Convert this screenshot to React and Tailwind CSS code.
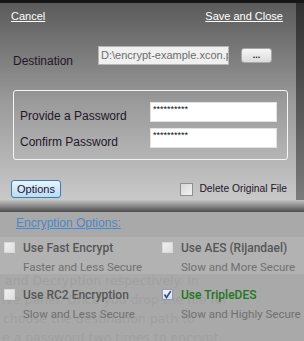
import React from "react";

const ghostLines = [
  "and Decryption respectively. In",
  "ive panel. Once you drop the file for",
  "choose the destination path to",
  "e a password two times to encrypt.",
];

function LightBox({ checked }) {
  return (
    <div
      className={`w-[11px] h-[11px] shrink-0 flex items-center justify-center ${
        checked
          ? "border border-[#8c9cb4] bg-gradient-to-b from-[#f4f4f4] to-[#dcdcdc]"
          : "border border-[#d8d8d8] bg-gradient-to-br from-[#f0f0f0] to-[#dedede]"
      }`}
    >
      {checked && (
        <svg width="9" height="9" viewBox="0 0 9 9">
          <path d="M1.5 4.5 L3.5 7.5 L7.8 1" fill="none" stroke="#2b4f95" strokeWidth="1.6" />
        </svg>
      )}
    </div>
  );
}

function Option({ label, hint, checked }) {
  return (
    <div className="flex items-start pt-[4px]">
      <div className="ml-[4px] mt-[1px]">
        <LightBox checked={checked} />
      </div>
      <div className="ml-[8px] flex flex-col">
        <span
          className={`font-['Roboto',sans-serif] font-medium text-[12px] leading-[14px] ${
            checked ? "text-[#237523]" : "text-[#565656]"
          }`}
        >
          {label}
        </span>
        <span className="mt-[5px] font-['Roboto',sans-serif] text-[11.5px] leading-[14px] text-[#707070]">
          {hint}
        </span>
      </div>
    </div>
  );
}

export default function App() {
  return (
    <div className="relative w-[304px] h-[341px] overflow-hidden bg-[#a9a9a9] font-['Liberation_Sans',sans-serif]">
      {/* faded page text behind the options */}
      <div className="absolute left-0 top-[271px] pl-[2px] font-['DejaVu_Sans',sans-serif] text-[12.5px] leading-[19px] text-[#a0a0a0] whitespace-nowrap">
        {ghostLines.map((l, i) => (
          <div key={i} className={i === 0 ? "pl-[3px]" : i === 2 ? "pl-[1px]" : ""}>
            {l}
          </div>
        ))}
      </div>

      <div className="relative">
        <div className="h-[3px] bg-[#161616]" />

        {/* dialog panel */}
        <div className="flex">
          <div className="w-[296px] h-[197px] bg-gradient-to-b from-[#5b5b5b] via-[#9a9a9a] to-[#c9c9c9] pl-[13px] pr-[13px]">
            <div className="flex justify-between pt-[6px] text-[11px] leading-[14px] text-white">
              <span className="underline -ml-[2px]">Cancel</span>
              <span className="underline">Save and Close</span>
            </div>

            <div className="flex items-start h-[19px] mt-[23px]">
              <span className="w-[85px] mt-[8px] text-[12px] leading-[14px] text-[#1f1729]">Destination</span>
              <div className="w-[131px] h-[19px] border border-[#b5b5b5] bg-[#f0f0f0] pl-[2px] overflow-hidden whitespace-nowrap text-[11px] leading-[17px] text-[#6d6d6d]">
                D:\encrypt-example.xcon.p
              </div>
              <div className="ml-[12px] mt-[2px] w-[31px] h-[15px] rounded-[3px] border border-[#a8a8a8] bg-gradient-to-b from-[#f6f6f6] to-[#dcdcdc] flex items-end justify-center pb-[2px]">
                <span className="text-[9px] leading-[9px] font-bold text-[#202020]">...</span>
              </div>
            </div>

            <div className="mt-[25px] w-[275px] h-[70px] border border-[#f4f6f8] rounded-[3px] pl-[6px] pt-[11px]">
              <div className="flex items-start h-[20px]">
                <span className="w-[130px] mt-[7px] text-[12px] leading-[14px] text-[#1f1729]">Provide a Password</span>
                <div className="w-[127px] h-[20px] bg-white border border-[#e2e2e2] pl-[2px] pt-[2px] text-[9px] leading-[9px] text-[#101010]">
                  **********
                </div>
              </div>
              <div className="flex items-start h-[20px] mt-[6px]">
                <span className="w-[130px] mt-[7px] text-[12px] leading-[14px] text-[#1f1729]">Confirm Password</span>
                <div className="w-[127px] h-[20px] bg-white border border-[#e2e2e2] pl-[2px] pt-[2px] text-[9px] leading-[9px] text-[#101010]">
                  **********
                </div>
              </div>
            </div>

            <div className="flex items-center justify-between mt-[20px] -ml-[2px]">
              <div className="w-[50px] h-[18px] rounded-[3px] border border-[#3c7fb1] bg-gradient-to-b from-[#e8f4fc] to-[#bcdcf3] flex items-center justify-center text-[11px] text-[#141438]">
                Options
              </div>
              <div className="flex items-center gap-[6px] -mr-[4px]">
                <div className="w-[13px] h-[13px] border border-[#8e8f8f] bg-gradient-to-br from-[#d6d6d6] to-[#f4f4f4]" />
                <span className="text-[10.3px] leading-[14px] text-[#1f1729]">Delete Original File</span>
              </div>
            </div>
          </div>
          <div className="w-[8px] h-[197px] bg-gradient-to-b from-[#303030] to-[#7c7c7c]" />
        </div>
        <div className="h-[12px] bg-gradient-to-b from-[#c3c3c3] via-[#8a8a8a] to-[#4c4c4c]" />

        {/* options area */}
        <div className="pt-[4px] pl-[16px] text-[12px] leading-[14px]">
          <span className="text-[#4a88c8] underline">Encryption Options:</span>
        </div>
        <div className="mt-[7px] h-[37px] bg-[#b2b2b2] grid grid-cols-[158px_1fr]">
          <Option label="Use Fast Encrypt" hint="Faster and Less Secure" />
          <Option label="Use AES (Rijandael)" hint="Slow and More Secure" />
        </div>
        <div className="pt-[10px] grid grid-cols-[158px_1fr]">
          <Option label="Use RC2 Encryption" hint="Slow and Less Secure" />
          <Option label="Use TripleDES" hint="Slow and Highly Secure" checked />
        </div>
      </div>
    </div>
  );
}
